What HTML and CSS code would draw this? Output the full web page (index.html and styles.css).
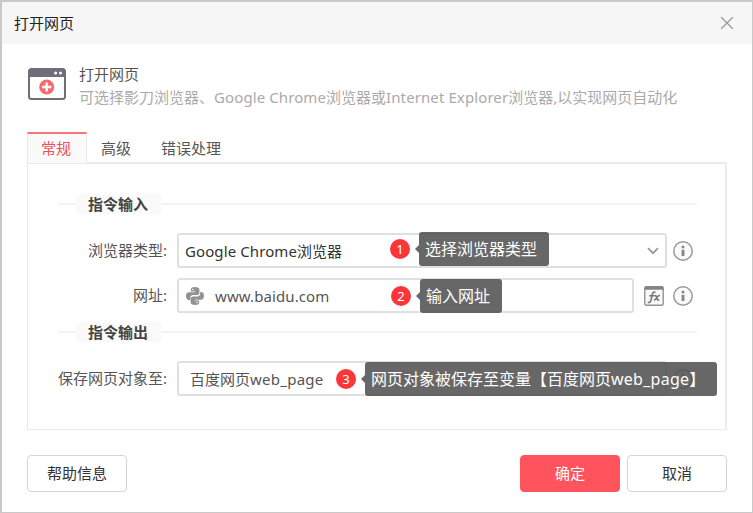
FILE: index.html
```html
<!DOCTYPE html>
<html lang="zh-CN">
<head>
<meta charset="utf-8">
<title>打开网页</title>
<link rel="stylesheet" href="styles.css">
</head>
<body>
<svg class="defs" width="0" height="0">
  <symbol id="info" viewBox="0 0 20 20">
    <circle cx="10" cy="10" r="9.2" fill="#fafafa" stroke="#999" stroke-width="1.5"/>
    <circle cx="10" cy="6.1" r="1.5" fill="#858585"/>
    <path d="M10 8.8v6.2" stroke="#858585" stroke-width="2.8"/>
  </symbol>
</svg>
<div class="dialog">
  <header class="titlebar">
    <h1>打开网页</h1>
    <svg class="close" viewBox="0 0 14 14"><path d="M1.200 1.200l11.600 11.600M12.800 1.200L1.200 12.800" stroke="#999" stroke-width="1.300" fill="none"/></svg>
  </header>
  <section class="intro">
    <svg class="intro-icon" viewBox="0 0 38 32">
      <rect x="1" y="1" width="36" height="30" rx="2.5" fill="#fff" stroke="#706e7a" stroke-width="2"/>
      <path d="M1 9V3.500Q1 1 3.500 1h31Q37 1 37 3.500V9z" fill="#706e7a"/>
      <circle cx="27.600" cy="5" r="1.500" fill="#fff"/><circle cx="32.500" cy="5" r="1.500" fill="#fff"/>
      <circle cx="18.700" cy="19" r="7.500" fill="#f8686c"/>
      <path d="M18.700 14.400v9.200M14.100 19h9.200" stroke="#fff" stroke-width="2.400"/>
    </svg>
    <div class="intro-text">
      <div class="name">打开网页</div>
      <div class="desc">可选择影刀浏览器、<span class="latin">Google Chrome</span>浏览器或<span class="latin">Internet Explorer</span>浏览器,以实现网页自动化</div>
    </div>
  </section>
  <nav class="tabs"><span class="tab active">常规</span><span class="tab">高级</span><span class="tab">错误处理</span></nav>
  <main class="panel">
    <div class="legend"><span>指令输入</span></div>
    <div class="row first">
      <label>浏览器类型:</label>
      <div class="field wide select"><span><span class="latin">Google Chrome</span>浏览器</span>
        <svg class="chevron" viewBox="0 0 12 8"><path d="M1 1.200l5 5 5-5" stroke="#999" stroke-width="1.700" fill="none"/></svg>
        <div class="note note1"><b>1</b><span class="tip">选择浏览器类型</span></div>
      </div>
      <svg class="info"><use href="#info"/></svg>
    </div>
    <div class="row second">
      <label>网址:</label>
      <div class="field url">
        <svg class="python" viewBox="0 0 18 18">
          <path fill="#929292" d="M8.800 0C5.700 0 4.900 1 4.900 2.700v1.900h4.300v.7H3C1.100 5.300 0 6.700 0 9.100s1 3.900 2.700 3.900h1.600v-2.100c0-1.600 1.300-2.800 2.900-2.800h3.900c1.300 0 2.300-1.100 2.300-2.400v-3C13.400 1 12 0 8.800 0z"/>
          <path fill="#929292" d="M9.200 18c3.100 0 3.900-1 3.900-2.700v-1.900H8.800v-.7H15c1.900 0 3-1.400 3-3.800S17 5 15.300 5h-1.100v1.800c0 1.600-1.300 2.800-2.900 2.800H7c-1.300 0-2.400 1.100-2.400 2.400v3.300C4.600 17 6 18 9.200 18z"/>
          <circle cx="6.900" cy="2.500" r=".8" fill="#fff"/><circle cx="11.100" cy="15.500" r=".8" fill="#fff"/>
        </svg>
        <span class="latin">www.baidu.com</span>
        <div class="note note2"><b>2</b><span class="tip">输入网址</span></div>
      </div>
      <svg class="fx" viewBox="0 0 20 20">
        <rect x=".8" y=".8" width="18.400" height="18.400" rx="1.500" fill="#fafafa" stroke="#929292" stroke-width="1.400"/>
        <path d="M.5 3.800V2Q.5.200 2 .200h16Q19.500.200 19.500 2v1.800z" fill="#858585"/>
        <path d="M11.500 6.500c-1.700-1-2.700-.3-3.200 1.900L7 14.200c-.5 2.200-1.700 2.800-3.300 2M5.200 9.700h5.100M10.500 9.800c1.500-.5 1.800.2 2.200 1.800.4 1.900.9 3 2.600 2.100M16 9.600c-1.700-.3-2.300 1-3.200 2.300-.9 1.200-1.600 2.200-3 1.900" fill="none" stroke="#777" stroke-width="1.600"/>
      </svg>
      <svg class="info"><use href="#info"/></svg>
    </div>
    <div class="legend out"><span>指令输出</span></div>
    <div class="row third">
      <label>保存网页对象至:</label>
      <div class="field wide output"><span>百度网页<span class="latin wider">web_page</span></span>
        <div class="note note3"><b>3</b><span class="tip">网页对象被保存至变量【百度网页<span class="latin wider">web_page</span>】</span></div>
      </div>
      <svg class="info"><use href="#info"/></svg>
    </div>
  </main>
  <footer>
    <button class="help">帮助信息</button><button class="ok">确定</button><button>取消</button>
  </footer>
</div>
</body>
</html>
```
FILE: styles.css
```css
* { box-sizing: border-box; }
body { margin: 0; font: 15px/20px "Noto Sans", "Noto Sans CJK SC", sans-serif; color: #555; }
.defs { position: absolute; }
.latin { letter-spacing: .1px; }
.wider { letter-spacing: .25px; }
.dialog { width: 753px; height: 513px; background: #fff; border: solid #c9c9c9; border-width: 2px 1px 1px 2px; overflow: hidden; }
.titlebar { height: 42px; background: #f6f6f6; display: flex; align-items: center; justify-content: space-between; padding: 0 18px 0 12px; }
h1 { margin: 0; font-size: 15px; line-height: 20px; font-weight: 400; color: #222; }
.close { width: 14px; height: 14px; }
.intro { height: 88px; padding: 21px 0 0 26px; display: flex; gap: 13px; }
.intro-icon { width: 38px; height: 32px; margin-top: 3px; }
.intro-text { white-space: nowrap; }
.name { line-height: 19px; }
.desc { line-height: 27px; color: #aaa; }
.tabs { display: flex; height: 31px; margin-left: 25px; position: relative; z-index: 1; }
.tab { padding: 6px 16px 0 14px; height: 31px; }
.tab.active { width: 60px; color: #f34c5a; background: #fafafa; border: solid #e8e8e8; border-width: 2px 1px 0; border-top-color: #f87572; padding: 4px 13px 0; }
.panel { width: 700px; height: 268px; margin: -1px 0 0 25px; border: solid #ebebeb; border-width: 2px 2px 1px 1px; padding: 30px 28px 0 30px; }
.legend { display: flex; height: 20px; align-items: center; font-weight: 700; color: #444; }
.legend::before, .legend::after { content: ""; height: 2px; background: #f3f3f3; }
.legend::before { width: 18px; }
.legend::after { flex: 1; }
.legend span { background: #fafafa; width: 85px; padding-left: 12px; }
.row { display: flex; align-items: center; height: 35px; }
.first { margin-top: 19px; }
.second { margin-top: 10px; }
.out { margin-top: 9px; }
.third { margin-top: 19px; }
label { width: 109px; margin-right: 10px; padding-bottom: 2px; text-align: right; white-space: nowrap; }
.field { position: relative; height: 35px; border: 2px solid #e0e0e0; border-radius: 3px; display: flex; align-items: center; white-space: nowrap; }
.wide { width: 490px; }
.url { width: 457px; padding-left: 7px; gap: 11px; }
.select { justify-content: space-between; padding: 0 6px; color: #333; }
.output { padding-left: 11px; }
.python { width: 18px; height: 18px; }
.chevron { width: 12px; height: 8px; }
.info { width: 20px; height: 20px; margin-left: 6px; flex: none; }
.fx { width: 20px; height: 20px; margin-left: 10px; flex: none; }
.url ~ .info { margin-left: 9px; }
.note { position: absolute; display: flex; align-items: center; gap: 9px; z-index: 2; color: #fff; font-size: 16px; height: 34px; }
.note1 { left: 211px; top: -3px; }
.note2 { left: 212px; top: -1px; }
.note3 { left: 157px; top: -1px; }
.note b { width: 20px; height: 20px; border-radius: 50%; background: #fc3638; font-size: 13px; font-weight: 400; text-align: center; }
.tip { position: relative; height: 34px; line-height: 34px; border-radius: 3px; background: rgba(80,80,80,.87); padding-left: 6px; }
.tip::before { content: ""; position: absolute; right: 100%; top: 13px; border: 4px solid transparent; border-left: 0; border-right-color: rgba(80,80,80,.87); }
.note1 .tip { width: 130px; }
.note2 .tip { width: 82px; }
.note3 .tip { width: 352px; }
footer { display: flex; padding: 25px 25px 0; }
button { width: 100px; height: 37px; padding: 0 0 2px; border: 1px solid #d4d4d4; border-radius: 4px; background: #fff; font: inherit; color: #333; }
.help { margin-right: auto; }
.ok { background: #ff535e; border-color: #ff535e; color: #fff; margin-right: 7px; }
```
